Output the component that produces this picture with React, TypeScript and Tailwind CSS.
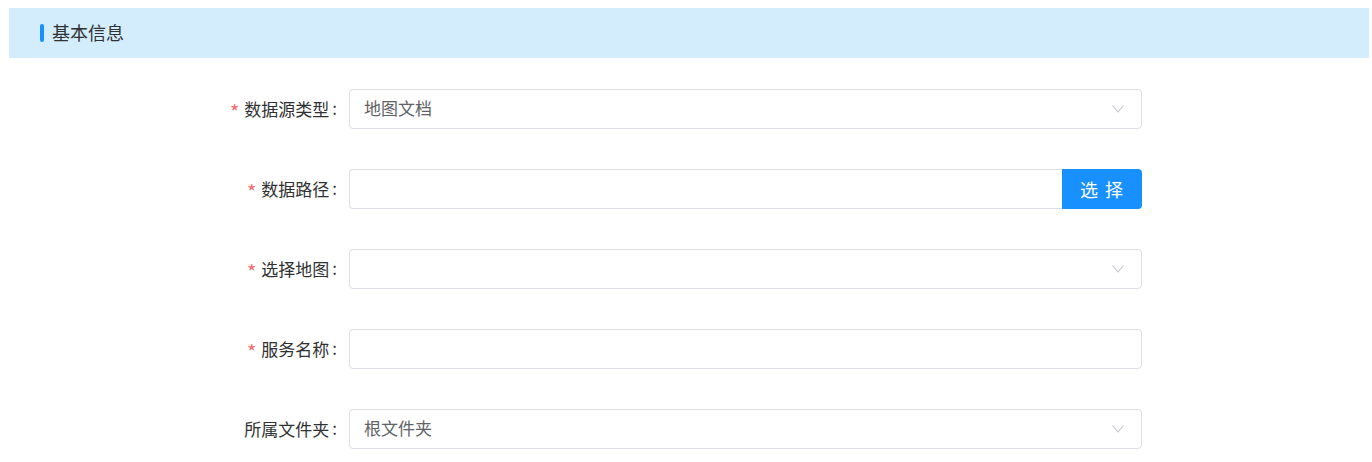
import React from "react";

const font = { fontFamily: '"Noto Sans CJK SC", "Noto Sans", sans-serif' };

function Chevron() {
  return (
    <svg width="12" height="8" viewBox="0 0 12 8" fill="none" className="shrink-0">
      <path d="M0.5 0.5 L6 7 L11.5 0.5" stroke="#c0c4cc" strokeWidth="1.1" />
    </svg>
  );
}

function FormRow({
  label,
  required,
  children,
}: {
  label: string;
  required?: boolean;
  children: React.ReactNode;
}) {
  return (
    <div className="flex items-center h-10">
      <label className="w-[200px] pr-[12px] flex justify-end items-center text-[17px] text-[#303133]">
        {required && (
          <span className="text-[#f56c6c] mr-[5px] text-[20px] leading-none translate-y-[3px]">*</span>
        )}
        <span>{label}</span>
        <span className="ml-[3px] -translate-y-[1px]">:</span>
      </label>
      <div className="w-[793px] h-10">{children}</div>
    </div>
  );
}

function SelectBox({ value }: { value?: string }) {
  return (
    <div className="h-10 border border-[#dcdfe6] rounded-[4px] bg-white flex items-center justify-between pl-[14px] pr-[17px]">
      <span className="text-[17px] text-[#606266] -translate-y-[1px]">{value}</span>
      <Chevron />
    </div>
  );
}

export default function App() {
  return (
    <div className="bg-white w-[1372px] h-[462px] overflow-hidden" style={font}>
      <div className="mt-[8px] ml-[9px] mr-[3px] h-[50px] bg-[#d3edfd] flex items-center pl-[31px]">
        <span className="w-[4px] h-[18px] rounded-full bg-[#1890ff] mr-[8px]" />
        <span className="text-[18px] text-[#303133] -translate-y-[1px]">基本信息</span>
      </div>
      <div className="mt-[31px] pl-[149px] flex flex-col gap-10">
        <FormRow label="数据源类型" required>
          <SelectBox value="地图文档" />
        </FormRow>
        <FormRow label="数据路径" required>
          <div className="flex h-10">
            <div className="flex-1 border border-[#dcdfe6] border-r-0 rounded-l-[4px] bg-white" />
            <button className="w-[80px] h-10 bg-[#1890ff] text-white text-[18px] tracking-[7px] rounded-r-[4px] pl-[6px]">
              选择
            </button>
          </div>
        </FormRow>
        <FormRow label="选择地图" required>
          <SelectBox />
        </FormRow>
        <FormRow label="服务名称" required>
          <div className="h-10 border border-[#dcdfe6] rounded-[4px] bg-white" />
        </FormRow>
        <FormRow label="所属文件夹">
          <SelectBox value="根文件夹" />
        </FormRow>
      </div>
    </div>
  );
}
